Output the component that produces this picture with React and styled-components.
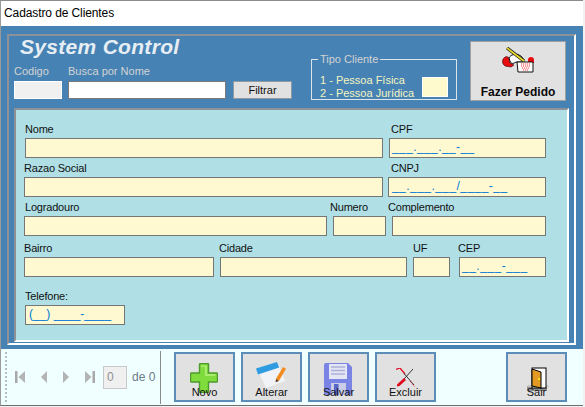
import React from "react";
import styled, { createGlobalStyle } from "styled-components";

const Global = createGlobalStyle`
  html, body { margin: 0; padding: 0; background: #f2f2f2; }
  body { font-family: "Liberation Sans", Arial, sans-serif; font-size: 11px; color: #111; }
  * { box-sizing: border-box; }
`;

const Window = styled.div`
  width: 583px; height: 406px; display: flex; flex-direction: column;
  border-top: 1px solid #8c8c8c; border-left: 1px solid #9a9a9a;
  border-bottom: 1px solid #6e6e6e; background: #fff;
`;
const TitleBar = styled.div`
  height: 25px; flex: none; display: flex; align-items: center; padding: 0 0 1px 3px;
  background: #fff; color: #000; font-size: 12px; letter-spacing: -0.1px;
`;
const BluePane = styled.div`
  height: 323px; flex: none; background: #4682b4; padding: 8px 7px 4px 6px; display: flex;
`;
const OuterGroup = styled.div`
  flex: 1; display: flex; flex-direction: column; padding: 0 5px 1px 5px;
  border-style: solid; border-width: 2px; border-color: #8e9296 #fff #fff #8e9296;
`;
const Header = styled.div`
  height: 72px; flex: none; display: flex; align-items: flex-start; margin-left: -5px;
`;
const LeftBlock = styled.div`
  width: 302px; flex: none; display: flex; flex-direction: column;
`;
const Brand = styled.div`
  height: 21px; margin-bottom: 2px; padding-left: 11px; display: flex; align-items: center;
  font: italic bold 21px "Liberation Sans", Arial, sans-serif; letter-spacing: 0.3px; color: #e6eef4;
  white-space: nowrap;
`;
const SearchRow = styled.div`
  display: flex; align-items: flex-end; padding: 4px 0 0 5px;
`;
const SearchCol = styled.div`
  width: ${p => p.$w}px; margin-right: ${p => p.$gap || 0}px; display: flex; flex-direction: column;
`;
const SearchLabel = styled.span`
  height: 18px; padding-top: 1px; line-height: 14px; color: #d3d3d3; font-size: 11px; white-space: nowrap;
`;
const SearchInput = styled.div`
  height: 18px; background: ${p => p.$off ? "#f0f0f0" : "#fff"};
  border: 1px solid ${p => p.$off ? "#fff" : "#7a7a7a"};
`;
const FilterButton = styled.button`
  width: 59px; height: 18px; padding: 0; background: #e1e1e1; border: 1px solid #8f9aa3;
  font: 11px "Liberation Sans", Arial, sans-serif; color: #111;
`;
const TipoBox = styled.fieldset`
  width: 146px; height: 48px; margin: 16px 0 0 0; padding: 0 8px 0 8px; flex: none;
  border: 1px solid #dbe4ea; display: flex; align-items: flex-start; justify-content: space-between;
`;
const TipoLegend = styled.legend`
  padding: 0 2px; margin-left: -2px; line-height: 14px; color: #d3d3d3; font-size: 11px;
`;
const TipoText = styled.div`
  margin-top: 8px; color: #f5f5c0; font-size: 11px; line-height: 13px; white-space: nowrap;
`;
const Swatch = styled.div`
  width: 26px; height: 20px; margin: 11px 0 0 0; background: #fffacd; border: 1px solid #fff;
`;
const OrderButton = styled.button`
  width: 96px; height: 60px; margin: 5px 0 0 13px; padding: 5px 0 0; flex: none;
  background: #e1e1e1; border: 1px solid #a0a0a0; display: flex; flex-direction: column;
  align-items: center; justify-content: flex-start; gap: 11px; line-height: 14px;
  font: bold 12px "Liberation Sans", Arial, sans-serif; color: #0a0a0a;
`;
const FormPanel = styled.div`
  flex: 1; display: flex; flex-direction: column; padding: 12px 20px 0 8px;
  background: #b0e0e6; border-style: solid; border-width: 2px; border-color: #8e9296 #fff #fff #8e9296;
`;
const Row = styled.div`
  display: flex; align-items: flex-start; height: ${p => p.$h}px; flex: none;
`;
const Field = styled.div`
  width: ${p => p.$w}px; margin-left: ${p => p.$x || 0}px; flex: none; display: flex; flex-direction: column;
`;
const Label = styled.label`
  height: 16px; line-height: 14px; margin-left: ${p => p.$dx || 0}px;
  color: #111; font-size: 11px; letter-spacing: -0.2px; white-space: nowrap;
`;
const TextBox = styled.div`
  height: 20px; background: #fff9d2; border: 1px solid #767676; overflow: hidden;
  padding-left: ${p => p.$pl || 2}px; line-height: 17px; font-size: 12px; color: #0078d7;
  letter-spacing: ${p => p.$ls || 0}px; white-space: nowrap;
`;
const Toolbar = styled.div`
  flex: 1; display: flex; align-items: center; background: #f0ffff;
`;
const Grip = styled.div`
  width: 2px; height: 50px; margin: 0 8px 0 4px; border-left: 2px dotted #b4bec2;
`;
const NavButton = styled.span`
  width: ${p => p.$w}px; margin-right: ${p => p.$m}px; display: flex; flex: none;
`;
const PageBox = styled.div`
  width: 24px; height: 23px; margin-left: -1px; background: #f0f0f0; border: 1px solid #c8c8c8; padding: 3px 0 0 3px;
  color: #8f8f8f; font-size: 12px;
`;
const OfText = styled.span`
  margin-left: 5px; width: 28px; color: #6d7a86; font-size: 12px; white-space: nowrap;
`;
const Separator = styled.div`
  width: 1px; height: 53px; background: #8a8a8a; margin: 0 13px 0 0;
`;
const ToolButton = styled.button`
  position: relative; width: 61px; height: 50px; margin-left: ${p => p.$m || 0}px; flex: none; padding: 0;
  background: #e1e1e1; border: 2px solid #5b8db8; display: flex; flex-direction: column; align-items: center;
  justify-content: flex-end; font: 11px "Liberation Sans", Arial, sans-serif; color: #111;
`;
const IconSlot = styled.span`
  position: absolute; left: ${p => p.$x}px; top: ${p => p.$y}px; display: flex;
`;
const ToolLabel = styled.span`
  position: relative; line-height: 14px; margin-bottom: 1px;
`;

const Icon = {
  First: () => <svg width="10" height="12" viewBox="0 0 10 12"><rect x="0" y="0" width="2.5" height="12" fill="#a8a8a8"/><path d="M10 0v12L3.5 6z" fill="#b4b4b4"/></svg>,
  Prev: () => <svg width="6" height="12" viewBox="0 0 6 12"><path d="M6 0v12L0 6z" fill="#b4b4b4"/></svg>,
  Next: () => <svg width="6" height="12" viewBox="0 0 6 12"><path d="M0 0v12L6 6z" fill="#b4b4b4"/></svg>,
  Last: () => <svg width="10" height="12" viewBox="0 0 10 12"><path d="M0 0v12L6.5 6z" fill="#b4b4b4"/><rect x="7.5" y="0" width="2.5" height="12" fill="#a8a8a8"/></svg>,
  Plus: () => <svg width="28" height="30" viewBox="0 0 28 30"><path d="M9.5 1.5a1 1 0 0 1 1-1h7a1 1 0 0 1 1 1V10H26.5a1 1 0 0 1 1 1v7a1 1 0 0 1-1 1H18.500V28.500a1 1 0 0 1-1 1h-7a1 1 0 0 1-1-1V19H1.500a1 1 0 0 1-1-1v-7a1 1 0 0 1 1-1H9.500z" fill="#7fdc3c" stroke="#4c9a2a" strokeWidth="1.4"/><path d="M11 2.500h6V11h8.500v2H15V4h-4z" fill="#a9ec6e"/></svg>,
  Note: () => <svg width="32" height="26" viewBox="0 0 32 26"><path d="M2 8 22 1l7 18-19 7z" fill="#f1f3f6"/><path d="M0 6.500 21 0l2.200 5.500L2 12.500z" fill="#2f9be0"/><path d="M27 5l3 1.800-7 12-3.300 1.500.3-3.500z" fill="#f28c1e"/><path d="M20 17l-.3 3.300 3-1.300z" fill="#444"/></svg>,
  Floppy: () => <svg width="28" height="34" viewBox="0 0 28 34"><path d="M2 0h22l4 4v26a2 2 0 0 1-2 2H2a2 2 0 0 1-2-2V2a2 2 0 0 1 2-2z" fill="#7a84e4"/><rect x="5" y="1" width="18" height="15" fill="#e4e6f4"/><path d="M7 4h14M7 7.500h14M7 11h14" stroke="#aab0d8" strokeWidth="1.500"/><rect x="7" y="20" width="15" height="12" fill="#c9cde8"/><rect x="10" y="21" width="4.500" height="11" fill="#5b66c9"/></svg>,
  Cross: () => <svg width="20" height="19" viewBox="0 0 20 19"><path d="M0 1.500 4 0l5 6" stroke="#e00d20" strokeWidth="1.300" fill="none"/><path d="M8 5.500 18 17" stroke="#222" strokeWidth=".9" fill="none"/><path d="M14 13l5 6" stroke="#e00d20" strokeWidth="1" strokeDasharray="1 1"/><path d="M17 1 8 11" stroke="#222" strokeWidth=".9" fill="none"/><path d="M8 10 1 16.500 1 18.500l2.500-.5L10 12z" fill="#e00d20"/></svg>,
  Door: () => <svg width="22" height="26" viewBox="0 0 22 26"><path d="M0 19h20v5H0z" fill="#8e8e8e"/><path d="M1 18h20l1 2H0z" fill="#c4c4c4"/><rect x="5" y="1" width="14" height="20" fill="#fff" stroke="#000" strokeWidth="1"/><path d="M5 2l9 3v16l-9-2z" fill="#e39a25" stroke="#000" strokeWidth="1"/><rect x="11" y="11" width="2" height="2" fill="#ffe71a"/></svg>,
  Order: () => <svg width="32" height="27" viewBox="0 0 32 27"><path d="M5 9.500a5 5 0 0 0 1 10l3 .5 3-2-4-2-1-5z" fill="#e80c10" stroke="#300" strokeWidth=".6"/><path d="M26 13a3 3 0 0 1 6 0v3h-6z" fill="#e80c10"/><path d="M7 11c1-3 7-5 10-3 3 1 5 4 5 7l-8 0c-3 2-5 2-6-1z" fill="#fff" stroke="#111" strokeWidth="1"/><path d="M15 15h16v10H16z" fill="#fff" stroke="#111" strokeWidth="1"/><path d="M19 17h9M19 19h9M20 21h7M21 23h5" stroke="#ef3a3a" strokeWidth="1" strokeDasharray="1.200 .8"/><path d="M5 1l17 13" stroke="#111" strokeWidth="3.200"/><path d="M5 1l17 13" stroke="#ecdc2a" strokeWidth="1.800"/></svg>,
};

export default function App() {
  return (
    <>
      <Global />
      <Window>
        <TitleBar>Cadastro de Clientes</TitleBar>
        <BluePane>
          <OuterGroup>
            <Header>
              <LeftBlock>
                <Brand>System Control</Brand>
                <SearchRow>
                  <SearchCol $w={48} $gap={6}><SearchLabel>Codigo</SearchLabel><SearchInput $off /></SearchCol>
                  <SearchCol $w={158} $gap={7}><SearchLabel>Busca por Nome</SearchLabel><SearchInput /></SearchCol>
                  <FilterButton>Filtrar</FilterButton>
                </SearchRow>
              </LeftBlock>
              <TipoBox>
                <TipoLegend>Tipo Cliente</TipoLegend>
                <TipoText>1 - Pessoa Física<br />2 - Pessoa Jurídica</TipoText>
                <Swatch />
              </TipoBox>
              <OrderButton><Icon.Order />Fazer Pedido</OrderButton>
            </Header>
            <FormPanel>
              <Row $h={39}>
                <Field $w={358} $x={1}><Label>Nome</Label><TextBox /></Field>
                <Field $w={157} $x={6}><Label $dx={2}>CPF</Label><TextBox $ls={0.4}>___.___.__-__</TextBox></Field>
              </Row>
              <Row $h={39}>
                <Field $w={359}><Label>Razao Social</Label><TextBox /></Field>
                <Field $w={158} $x={5}><Label $dx={3}>CNPJ</Label><TextBox $pl={3} $ls={0.45}>__.___.___/____-__</TextBox></Field>
              </Row>
              <Row $h={41}>
                <Field $w={303}><Label $dx={1}>Logradouro</Label><TextBox /></Field>
                <Field $w={53} $x={6}><Label $dx={-3}>Numero</Label><TextBox /></Field>
                <Field $w={154} $x={6}><Label $dx={-4}>Complemento</Label><TextBox /></Field>
              </Row>
              <Row $h={48}>
                <Field $w={190}><Label>Bairro</Label><TextBox /></Field>
                <Field $w={187} $x={6}><Label $dx={-1}>Cidade</Label><TextBox /></Field>
                <Field $w={37} $x={6}><Label>UF</Label><TextBox /></Field>
                <Field $w={87} $x={9}><Label $dx={-1}>CEP</Label><TextBox $ls={0.5}>__.___-___</TextBox></Field>
              </Row>
              <Row $h={39}>
                <Field $w={100} $x={1}><Label>Telefone:</Label><TextBox $pl={3}>(__) ____-____</TextBox></Field>
              </Row>
            </FormPanel>
          </OuterGroup>
        </BluePane>
        <Toolbar>
          <Grip />
          <NavButton $w={10} $m={16}><Icon.First /></NavButton>
          <NavButton $w={6} $m={16}><Icon.Prev /></NavButton>
          <NavButton $w={6} $m={16}><Icon.Next /></NavButton>
          <NavButton $w={10} $m={9}><Icon.Last /></NavButton>
          <PageBox>0</PageBox>
          <OfText>de 0</OfText>
          <Separator />
          <ToolButton><IconSlot $x={14} $y={9}><Icon.Plus /></IconSlot><ToolLabel>Novo</ToolLabel></ToolButton>
          <ToolButton $m={6}><IconSlot $x={13} $y={8}><Icon.Note /></IconSlot><ToolLabel>Alterar</ToolLabel></ToolButton>
          <ToolButton $m={6}><IconSlot $x={14} $y={9}><Icon.Floppy /></IconSlot><ToolLabel>Salvar</ToolLabel></ToolButton>
          <ToolButton $m={6}><IconSlot $x={19} $y={14}><Icon.Cross /></IconSlot><ToolLabel>Excluir</ToolLabel></ToolButton>
          <ToolButton $m={70}><IconSlot $x={19} $y={13}><Icon.Door /></IconSlot><ToolLabel>Sair</ToolLabel></ToolButton>
        </Toolbar>
      </Window>
    </>
  );
}
